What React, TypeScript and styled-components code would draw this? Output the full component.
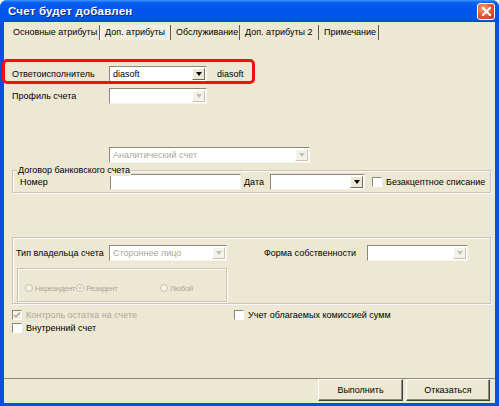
import styled, { createGlobalStyle } from "styled-components";

const BG = "#ece8d3";
const DISABLED = "#aca899";
const SHADOW = "#8c897a";

const GlobalStyle = createGlobalStyle`
  html, body { margin: 0; padding: 0; background: #fff; }
  body {
    font-family: "Liberation Sans", Arial, sans-serif;
    font-size: 9px;
    color: #000;
  }
`;

const Window = styled.div`
  width: 499px;
  height: 406px;
  display: flex;
  flex-direction: column;
  background: #0b4fe0;
  border-radius: 7px 7px 0 0;
  overflow: hidden;
`;

const TitleBar = styled.div`
  flex: none;
  height: 22px;
  display: flex;
  align-items: center;
  justify-content: space-between;
  padding: 0 4px 0 8px;
  background: linear-gradient(180deg, #3d95ff 0%, #0a5ff2 12%, #0055ea 45%, #0058ee 80%, #0049d4 100%);
`;

const Title = styled.span`
  color: #fff;
  font: bold 11.5px "Liberation Sans", Arial, sans-serif;
  letter-spacing: 0.2px;
  text-shadow: 1px 1px #0c2a8c;
`;

const CloseButton = styled.div`
  width: 18px;
  height: 17px;
  box-sizing: border-box;
  border: 1px solid #fff;
  border-radius: 3px;
  background: radial-gradient(circle at 35% 30%, #f3a185, #e2532d 55%, #c23a16);
  display: flex;
  align-items: center;
  justify-content: center;
`;

const Body = styled.div`
  flex: 1;
  min-height: 0;
  margin: 0 4px 3px 4px;
  background: ${BG};
  display: flex;
  flex-direction: column;
`;

const TabStrip = styled.div`
  flex: none;
  height: 18px;
  box-sizing: border-box;
  padding: 3px 0 0 4px;
  display: flex;
`;

const Tab = styled.div<{ $w: number; $active?: boolean }>`
  width: ${(p) => p.$w}px;
  height: 15px;
  line-height: 14px;
  box-sizing: border-box;
  padding: 0 4px;
  white-space: nowrap;
  overflow: hidden;
  border-right: 1px solid #5e5c52;
  border-left: 1px solid ${(p) => (p.$active ? "#fff" : "transparent")};
  background: ${(p) => (p.$active ? "#f1eee0" : "transparent")};
`;

const Panel = styled.div`
  flex: 1;
  min-height: 0;
  display: flex;
  flex-direction: column;
  padding: 0 4px 0 8px;
`;

const Row = styled.div<{ $mt: number }>`
  position: relative;
  display: flex;
  align-items: center;
  height: 16px;
  margin-top: ${(p) => p.$mt}px;
`;

const Highlight = styled.div`
  position: absolute;
  left: -10px;
  top: -7px;
  width: 253px;
  height: 25px;
  box-sizing: border-box;
  border: 3px solid #f01010;
  border-radius: 5px;
  pointer-events: none;
`;

const Label = styled.span<{ $w?: number; $ml?: number; $disabled?: boolean }>`
  flex: none;
  width: ${(p) => (p.$w ? `${p.$w}px` : "auto")};
  margin-left: ${(p) => p.$ml ?? 0}px;
  white-space: nowrap;
  color: ${(p) => (p.$disabled ? DISABLED : "#000")};
`;

const Field = styled.div<{ $w: number }>`
  flex: none;
  width: ${(p) => p.$w}px;
  height: 16px;
  box-sizing: border-box;
  display: flex;
  background: #fff;
  border: 1px solid;
  border-color: ${SHADOW} #f6f4ea #f6f4ea ${SHADOW};
  padding: 1px;
`;

const FieldValue = styled.span<{ $disabled?: boolean }>`
  flex: 1;
  line-height: 12px;
  padding-left: 2px;
  white-space: nowrap;
  overflow: hidden;
  color: ${(p) => (p.$disabled ? DISABLED : "#000")};
`;

const ArrowButton = styled.span<{ $disabled?: boolean }>`
  flex: none;
  width: 13px;
  box-sizing: border-box;
  display: flex;
  align-items: center;
  justify-content: center;
  background: ${(p) => (p.$disabled ? "#f4f2ea" : BG)};
  border: 1px solid;
  border-color: ${(p) => (p.$disabled ? "#fff #c6c3b5 #c6c3b5 #fff" : "#fff #6f6c60 #6f6c60 #fff")};
`;

const Triangle = styled.span<{ $disabled?: boolean }>`
  width: 0;
  height: 0;
  border-left: 3.5px solid transparent;
  border-right: 3.5px solid transparent;
  border-top: 4px solid ${(p) => (p.$disabled ? "#c2bfb1" : "#000")};
`;

const SideText = styled.span`
  margin-left: 10px;
`;

const GroupBox = styled.div<{ $mt: number; $pad: string }>`
  position: relative;
  margin-top: ${(p) => p.$mt}px;
  padding: ${(p) => p.$pad};
  border: 1px solid #c9c5b1;
  box-shadow: inset 1px 1px #fbfaf4, 1px 1px #fbfaf4;
`;

const GroupTitle = styled.span`
  position: absolute;
  left: 4px;
  top: -7px;
  padding: 0 1px;
  line-height: 12px;
  background: ${BG};
`;

const GroupRow = styled.div`
  display: flex;
  align-items: center;
  height: 16px;
`;

const RadioGroup = styled.div`
  margin: 7px 0 0 1px;
  width: 210px;
  height: 34px;
  box-sizing: border-box;
  padding: 14px 0 0 7px;
  border: 1px solid #c9c5b1;
  box-shadow: inset 1px 1px #fbfaf4, 1px 1px #fbfaf4;
  display: grid;
  grid-template-columns: 51px 84px auto;
  align-items: start;
`;

const RadioItem = styled.span`
  display: flex;
  align-items: center;
  gap: 2px;
  height: 10px;
  font-size: 8px;
  letter-spacing: -0.4px;
  color: ${DISABLED};
  white-space: nowrap;
`;

const RadioCircle = styled.span<{ $on?: boolean }>`
  flex: none;
  width: 8px;
  height: 8px;
  box-sizing: border-box;
  border-radius: 50%;
  border: 1px solid #c2bfb1;
  background: #f4f2ea;
  display: flex;
  align-items: center;
  justify-content: center;
  &::after {
    content: "";
    width: 2px;
    height: 2px;
    border-radius: 50%;
    background: ${(p) => (p.$on ? "#aca899" : "transparent")};
  }
`;

const CheckGrid = styled.div<{ $mt: number }>`
  display: grid;
  grid-template-columns: 222px 1fr;
  margin-top: ${(p) => p.$mt}px;
  height: 10px;
`;

const CheckItem = styled.span<{ $disabled?: boolean; $ml?: number }>`
  display: flex;
  align-items: center;
  gap: 4px;
  margin-left: ${(p) => p.$ml ?? 0}px;
  white-space: nowrap;
  color: ${(p) => (p.$disabled ? DISABLED : "#000")};
`;

const CheckBox = styled.span<{ $disabled?: boolean }>`
  flex: none;
  width: 10px;
  height: 10px;
  box-sizing: border-box;
  border: 1px solid;
  border-color: ${SHADOW} #fff #fff ${SHADOW};
  background: ${(p) => (p.$disabled ? "#f4f2ea" : "#fff")};
  display: flex;
  align-items: center;
  justify-content: center;
`;

const Footer = styled.div`
  flex: none;
  height: 25px;
  box-sizing: border-box;
  border-top: 1px solid ${SHADOW};
  display: flex;
  justify-content: flex-end;
  align-items: flex-start;
  gap: 3px;
  padding-right: 5px;
`;

const Button = styled.div<{ $w: number }>`
  width: ${(p) => p.$w}px;
  height: 22px;
  box-sizing: border-box;
  border: 1px solid;
  border-color: #fff #404040 #404040 #fff;
  box-shadow: inset -1px -1px ${SHADOW};
  display: flex;
  align-items: center;
  justify-content: center;
`;

type ComboProps = { w: number; value?: string; disabled?: boolean };

const Combo = ({ w, value = "", disabled }: ComboProps) => (
  <Field $w={w}>
    <FieldValue $disabled={disabled}>{value}</FieldValue>
    <ArrowButton $disabled={disabled}>
      <Triangle $disabled={disabled} />
    </ArrowButton>
  </Field>
);

const Check = ({ checked, disabled }: { checked?: boolean; disabled?: boolean }) => (
  <CheckBox $disabled={disabled}>
    {checked && (
      <svg width="8" height="8" viewBox="0 0 8 8">
        <path d="M1 4 L3 6 L7 1.5" fill="none" stroke={disabled ? DISABLED : "#000"} strokeWidth="1.5" />
      </svg>
    )}
  </CheckBox>
);

const App = () => {
  return (
    <>
      <GlobalStyle />
      <Window>
        <TitleBar>
          <Title>Счет будет добавлен</Title>
          <CloseButton>
            <svg width="9" height="9" viewBox="0 0 9 9">
              <path d="M1 1 L8 8 M8 1 L1 8" stroke="#fff" strokeWidth="2" strokeLinecap="square" />
            </svg>
          </CloseButton>
        </TitleBar>
        <Body>
          <TabStrip>
            <Tab $w={92}>Основные атрибуты</Tab>
            <Tab $w={71} $active>Доп. атрибуты</Tab>
            <Tab $w={69}>Обслуживание</Tab>
            <Tab $w={79}>Доп. атрибуты 2</Tab>
            <Tab $w={60}>Примечание</Tab>
          </TabStrip>
          <Panel>
            <Row $mt={26}>
              <Highlight />
              <Label $w={97}>Ответоисполнитель</Label>
              <Combo w={98} value="diasoft" />
              <SideText>diasoft</SideText>
            </Row>
            <Row $mt={6}>
              <Label $w={97}>Профиль счета</Label>
              <Combo w={98} disabled />
            </Row>
            <Row $mt={43}>
              <Label $w={97} />
              <Combo w={201} value="Аналитический счет" disabled />
            </Row>

            <GroupBox $mt={7} $pad="3px 0 2px 7px">
              <GroupTitle>Договор банковского счета</GroupTitle>
              <GroupRow>
                <Label $w={90}>Номер</Label>
                <Field $w={131} />
                <Label $w={26} $ml={3}>Дата</Label>
                <Combo w={95} />
                <CheckItem $ml={7}>
                  <Check />
                  Безакцептное списание
                </CheckItem>
              </GroupRow>
            </GroupBox>

            <GroupBox $mt={44} $pad="7px 0 1px 3px">
              <GroupRow>
                <Label $w={93}>Тип владельца счета</Label>
                <Combo w={118} value="Стороннее лицо" disabled />
                <Label $w={103} $ml={37}>Форма собственности</Label>
                <Combo w={101} disabled />
              </GroupRow>
              <RadioGroup>
                <RadioItem>
                  <RadioCircle />
                  Нерезидент
                </RadioItem>
                <RadioItem>
                  <RadioCircle $on />
                  Резидент
                </RadioItem>
                <RadioItem>
                  <RadioCircle />
                  Любой
                </RadioItem>
              </RadioGroup>
            </GroupBox>

            <CheckGrid $mt={6}>
              <CheckItem $disabled>
                <Check checked disabled />
                Контроль остатка на счете
              </CheckItem>
              <CheckItem>
                <Check />
                Учет облагаемых комиссией сумм
              </CheckItem>
            </CheckGrid>
            <CheckGrid $mt={3}>
              <CheckItem>
                <Check />
                Внутренний счет
              </CheckItem>
            </CheckGrid>
          </Panel>
          <Footer>
            <Button $w={85}>Выполнить</Button>
            <Button $w={84}>Отказаться</Button>
          </Footer>
        </Body>
      </Window>
    </>
  );
};

export default App;
